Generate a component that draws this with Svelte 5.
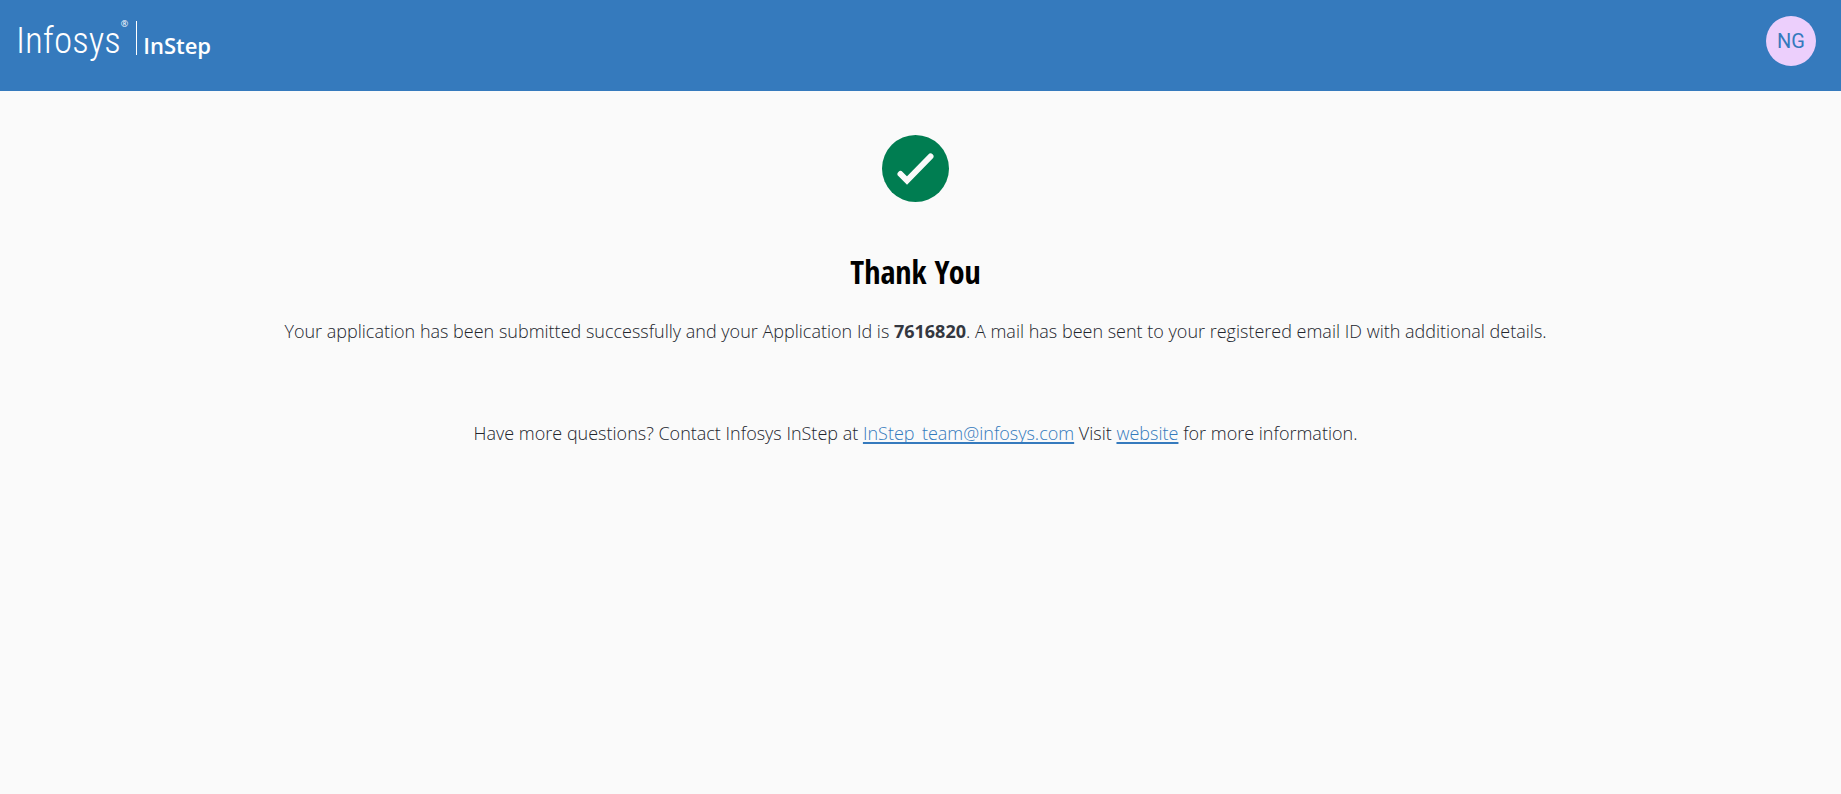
<script>
  const applicationId = '7616820';
  const initials = 'NG';
</script>

<header>
  <a class="brand" href="/" aria-label="Infosys InStep">
    <span class="wordmark">Infosys</span>
    <span class="mark">®</span>
    <span class="program">InStep</span>
  </a>
  <button class="avatar" type="button">{initials}</button>
</header>

<main>
  <svg class="check" viewBox="0 0 67 67" aria-hidden="true">
    <circle cx="33.5" cy="33.5" r="33.5" fill="#007d51" />
    <path d="M18.5 39 L25 45.5 L48.5 21.5" fill="none" stroke="#fafafa" stroke-width="6" stroke-linecap="round" />
  </svg>
  <h1>Thank You</h1>
  <p>
    Your application has been submitted successfully and your Application Id is <strong>{applicationId}</strong>. A mail has been sent to your registered email ID with additional details.
  </p>
  <p class="contact">
    Have more questions? Contact Infosys InStep at <a href="mailto:InStep_team@infosys.com">InStep_team@infosys.com</a> Visit <a href="/instep">website</a> for more information.
  </p>
</main>

<style>
  :global(body) {
    background: #fafafa;
  }
  header {
    display: flex;
    justify-content: space-between;
    align-items: flex-start;
    box-sizing: border-box;
    height: 91px;
    padding: 16px 25px 0 16px;
    background: #357abd;
  }
  .brand {
    display: flex;
    align-items: flex-start;
    color: #fff;
    text-decoration: none;
    font-family: "Open Sans", sans-serif;
  }
  .wordmark {
    font-family: "Roboto Condensed", sans-serif;
    font-size: 37px;
    font-weight: 300;
    line-height: 50px;
  }
  .mark {
    font-size: 9px;
    line-height: 16px;
  }
  .program {
    margin: 5px 0 0 8px;
    padding: 14px 0 0 6px;
    border-left: 1px solid #fff;
    font-family: "Open Sans", sans-serif;
    font-size: 22px;
    font-weight: 600;
    line-height: 20px;
  }
  .avatar {
    width: 50px;
    height: 50px;
    padding: 0;
    border: 0;
    border-radius: 50%;
    background: #eccffc;
    color: #357abd;
    font: 20px/50px Roboto, sans-serif;
  }
  main {
    display: flex;
    flex-direction: column;
    align-items: center;
    padding: 44px 10px 0 0;
    color: #22252d;
    font-family: "Open Sans", sans-serif;
    text-align: center;
  }
  .check {
    width: 67px;
    height: 67px;
  }
  h1 {
    margin: 47px 0 0;
    color: #000;
    font-family: "Open Sans Condensed", "Roboto Condensed", sans-serif;
    font-size: 32px;
    font-weight: 500;
    line-height: 46px;
  }
  p {
    margin: 20px 0 0;
    font-size: 18px;
    font-weight: 300;
    line-height: 32px;
  }
  .contact {
    margin-top: 70px;
  }
  strong {
    color: #34373f;
    font-weight: 700;
  }
  p a {
    color: #357abd;
    text-decoration-thickness: 2px;
    text-underline-offset: 2px;
    text-decoration-skip-ink: none;
  }
</style>
